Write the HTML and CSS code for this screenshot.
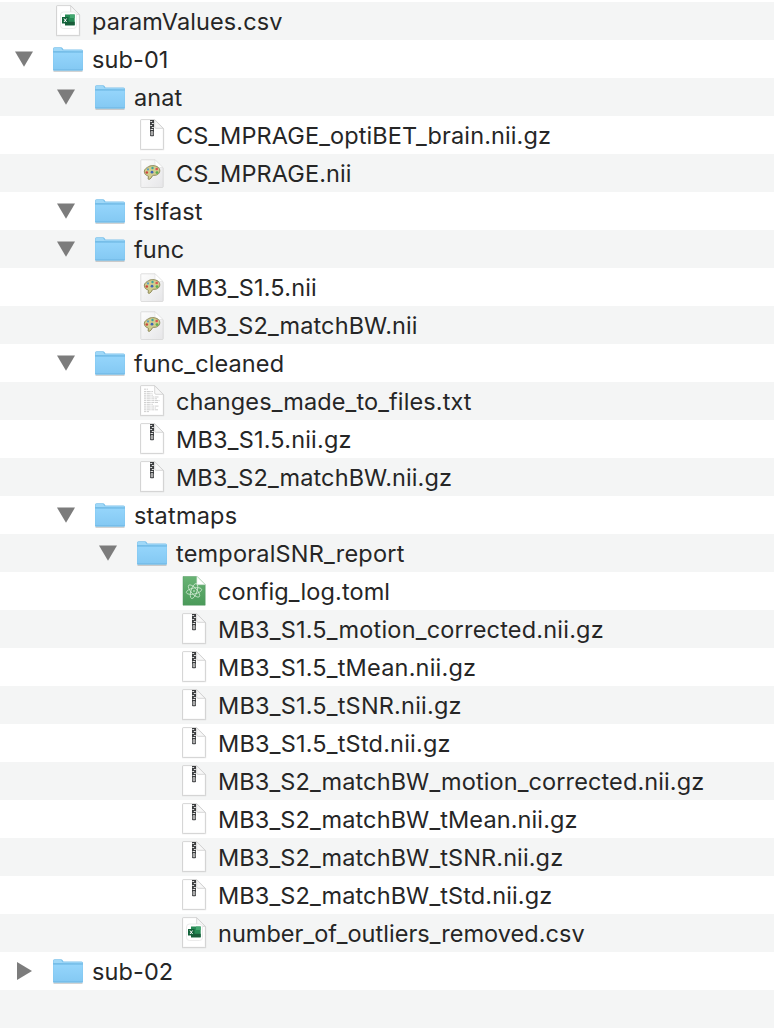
FILE: index.html
```
<!DOCTYPE html>
<html lang="en">
<head>
<meta charset="utf-8">
<title>Files</title>
<link rel="stylesheet" href="styles.css">
</head>
<body>
<svg class="defs" width="0" height="0">
  <defs>
    <linearGradient id="blue" x2="0" y2="1"><stop stop-color="#95d5fb"/><stop offset="1" stop-color="#84c9f3"/></linearGradient>
    <linearGradient id="green" x2="0" y2="1"><stop stop-color="#68b374"/><stop offset="1" stop-color="#4a9a59"/></linearGradient>
    <linearGradient id="grey" x2="1" y2="1"><stop stop-color="#fdfdfd"/><stop offset="1" stop-color="#e6e6e8"/></linearGradient>
    <symbol id="down" viewBox="0 0 20 20"><path d="M1 2.6H19L10 17.8Z" fill="#7c7c7c"/></symbol>
    <symbol id="right" viewBox="0 0 20 20"><path d="M3 1V19L18 10Z" fill="#7c7c7c"/></symbol>
    <symbol id="folder" viewBox="0 0 32 32">
      <path d="M1.5 28.2H30.5" stroke="#000" stroke-opacity=".22" stroke-width="1.2"/>
      <path d="M1 6Q1 4.3 2.5 4.3H9Q10 4.3 10.7 5.2L11.5 6.5H29.5Q31 6.5 31 8V26.5Q31 27.6 29.8 27.6H2.2Q1 27.6 1 26.5Z" fill="#7cc2ec"/>
      <path d="M1.5 8V6Q1.5 5 2.6 5H9L10.6 7.2H29.3Q30.5 7.2 30.5 8.6Z" fill="#9fd8f8"/>
      <path d="M1.3 9.3H30.7V26.6H1.3Z" fill="url(#blue)"/>
      <path d="M1.2 9H30.8M1.2 27H30.8" stroke="#68b4e1" stroke-width=".8"/>
    </symbol>
    <symbol id="page" viewBox="0 0 32 32">
      <path d="M4 1.2H19.2L28.2 10V31.2H4Z" fill="#000" opacity=".1"/>
      <path d="M5.3.6H18.7L27.4 9.4V29.6Q27.4 30.4 26.6 30.4H5.4Q4.6 30.4 4.6 29.6V1.3Q4.6.6 5.3.6Z" fill="#fff" stroke="#cbcbcb" stroke-width=".8"/>
      <path d="M18.7.8V8Q18.7 9.3 20 9.3H27.2Z" fill="#f8f8f8" stroke="#cecece" stroke-width=".8"/>
    </symbol>
    <symbol id="csv" viewBox="0 0 32 32">
      <use href="#page"/>
      <rect x="8.5" y="7" width="16" height="16.5" rx="3" fill="#fff" stroke="#e6e6e6" stroke-width=".8"/>
      <path d="M13 9.5H22.7V20.3H13Z" fill="#278a55"/>
      <path d="M18 9.5H22.7V13H18Z" fill="#43a770"/>
      <path d="M13 16.8H22.7V20.3H13Z" fill="#195c39"/>
      <path d="M10 12H16.5V18.5H10Z" fill="#12633a"/>
      <path d="M12 13.5L14.6 17M14.6 13.5L12 17" stroke="#fff" stroke-width="1"/>
    </symbol>
    <symbol id="zip" viewBox="0 0 32 32">
      <use href="#page"/>
      <path d="M14 1H18V16Q18 17.2 17 17.2H15Q14 17.2 14 16Z" fill="#3b3d3f"/>
      <path d="M14.3 2.5H16.2M15.8 4.5H17.8M14.3 6.5H16.2M15.8 8.5H17.8M14.6 10.5H17.2" stroke="#e2e2e2" stroke-width="1.1"/>
      <path d="M15.1 12.6H16.9V15.8H15.1Z" fill="#888" stroke="#ddd" stroke-width=".7"/>
    </symbol>
    <symbol id="nii" viewBox="0 0 32 32">
      <path d="M5.4 2.8H19L27.2 11V29.6Q27.2 30.5 26.3 30.5H5.6Q4.8 30.5 4.8 29.6V3.5Q4.8 2.8 5.4 2.8Z" fill="url(#grey)" stroke="#d3d3d3" stroke-width=".7"/>
      <path d="M19 2.8V9Q19 10.5 20.5 10.5H27Z" fill="#fff" stroke="#ddd" stroke-width=".6"/>
      <path d="M8.4 15.2C7.8 12 11.3 10.5 13 9.4C15.5 8 21 8.4 23 11.2C24.7 13.8 23.5 17 20.5 18C18.6 18.7 16.9 17.8 16.3 18.9C15.5 20.3 14.6 22.3 12.8 22.4C11.3 22.3 12.8 20 12.3 19.2C11.6 18.4 9 18.6 8.4 15.2Z" fill="#d1cd8d" stroke="#85804f" stroke-width=".9"/>
      <circle cx="12" cy="12.4" r="1.1" fill="#5e9fc0"/><circle cx="16.5" cy="11" r="1.2" fill="#41a49b"/>
      <circle cx="20.7" cy="12" r="1.3" fill="#df5551"/><circle cx="21" cy="15.6" r="1.4" fill="#5cad4e"/>
      <circle cx="10.8" cy="15.5" r="1.3" fill="#cd483e"/><circle cx="16" cy="15.2" r="1.4" fill="#3f65b4"/>
    </symbol>
    <symbol id="txt" viewBox="0 0 32 32">
      <use href="#page"/>
      <path d="M8 4.2H12M8 6.5H17M8 8.3H16.5M8 10.2H17M8 12H23M8 13.8H21M8 15.6H23.5M8 17.5H22M8 19.3H17M8 21.1H23M8 23H20M8 24.8H22M8 26.6H13" stroke="#bbb" stroke-width=".7" stroke-dasharray="2.2 .6 3.1 .5 1.2 .5"/>
    </symbol>
    <symbol id="toml" viewBox="0 0 32 32">
      <path d="M5 1.5H19L27.2 9.7V30.2H5Z" fill="url(#green)" stroke="#529660" stroke-width=".5"/>
      <path d="M18.8 1.2V9.7H27.3Z" fill="#fff" stroke="#bcd8c0" stroke-width=".5"/>
      <g fill="none" stroke="#d3ead5" stroke-width=".75">
        <ellipse cx="16" cy="16" rx="7.8" ry="3" transform="rotate(-12 16 16)"/>
        <ellipse cx="16" cy="16" rx="7.8" ry="3" transform="rotate(48 16 16)"/>
        <ellipse cx="16" cy="16" rx="7.8" ry="3" transform="rotate(108 16 16)"/>
      </g>
      <circle cx="16" cy="16" r=".8" fill="#e2f2e2"/>
    </symbol>
  </defs>
</svg>
<main class="tree">
  <div class="row l0"><span class="arrow"></span><svg class="icon"><use href="#csv"/></svg><span class="name">paramValues.csv</span></div>
  <div class="row l0"><svg class="arrow"><use href="#down"/></svg><svg class="icon"><use href="#folder"/></svg><span class="name">sub-01</span></div>
  <div class="row l1"><svg class="arrow"><use href="#down"/></svg><svg class="icon"><use href="#folder"/></svg><span class="name">anat</span></div>
  <div class="row l2"><span class="arrow"></span><svg class="icon"><use href="#zip"/></svg><span class="name">CS_MPRAGE_optiBET_brain.nii.gz</span></div>
  <div class="row l2"><span class="arrow"></span><svg class="icon"><use href="#nii"/></svg><span class="name">CS_MPRAGE.nii</span></div>
  <div class="row l1"><svg class="arrow"><use href="#down"/></svg><svg class="icon"><use href="#folder"/></svg><span class="name">fslfast</span></div>
  <div class="row l1"><svg class="arrow"><use href="#down"/></svg><svg class="icon"><use href="#folder"/></svg><span class="name">func</span></div>
  <div class="row l2"><span class="arrow"></span><svg class="icon"><use href="#nii"/></svg><span class="name wide">MB3_S1.5.nii</span></div>
  <div class="row l2"><span class="arrow"></span><svg class="icon"><use href="#nii"/></svg><span class="name">MB3_S2_matchBW.nii</span></div>
  <div class="row l1"><svg class="arrow"><use href="#down"/></svg><svg class="icon"><use href="#folder"/></svg><span class="name">func_cleaned</span></div>
  <div class="row l2"><span class="arrow"></span><svg class="icon"><use href="#txt"/></svg><span class="name">changes_made_to_files.txt</span></div>
  <div class="row l2"><span class="arrow"></span><svg class="icon"><use href="#zip"/></svg><span class="name wide">MB3_S1.5.nii.gz</span></div>
  <div class="row l2"><span class="arrow"></span><svg class="icon"><use href="#zip"/></svg><span class="name">MB3_S2_matchBW.nii.gz</span></div>
  <div class="row l1"><svg class="arrow"><use href="#down"/></svg><svg class="icon"><use href="#folder"/></svg><span class="name wide">statmaps</span></div>
  <div class="row l2"><svg class="arrow"><use href="#down"/></svg><svg class="icon"><use href="#folder"/></svg><span class="name wide">temporalSNR_report</span></div>
  <div class="row l3"><span class="arrow"></span><svg class="icon"><use href="#toml"/></svg><span class="name">config_log.toml</span></div>
  <div class="row l3"><span class="arrow"></span><svg class="icon"><use href="#zip"/></svg><span class="name wide">MB3_S1.5_motion_corrected.nii.gz</span></div>
  <div class="row l3"><span class="arrow"></span><svg class="icon"><use href="#zip"/></svg><span class="name wide">MB3_S1.5_tMean.nii.gz</span></div>
  <div class="row l3"><span class="arrow"></span><svg class="icon"><use href="#zip"/></svg><span class="name wide">MB3_S1.5_tSNR.nii.gz</span></div>
  <div class="row l3"><span class="arrow"></span><svg class="icon"><use href="#zip"/></svg><span class="name wide">MB3_S1.5_tStd.nii.gz</span></div>
  <div class="row l3"><span class="arrow"></span><svg class="icon"><use href="#zip"/></svg><span class="name">MB3_S2_matchBW_motion_corrected.nii.gz</span></div>
  <div class="row l3"><span class="arrow"></span><svg class="icon"><use href="#zip"/></svg><span class="name">MB3_S2_matchBW_tMean.nii.gz</span></div>
  <div class="row l3"><span class="arrow"></span><svg class="icon"><use href="#zip"/></svg><span class="name">MB3_S2_matchBW_tSNR.nii.gz</span></div>
  <div class="row l3"><span class="arrow"></span><svg class="icon"><use href="#zip"/></svg><span class="name">MB3_S2_matchBW_tStd.nii.gz</span></div>
  <div class="row l3"><span class="arrow"></span><svg class="icon"><use href="#csv"/></svg><span class="name tight">number_of_outliers_removed.csv</span></div>
  <div class="row l0"><svg class="arrow"><use href="#right"/></svg><svg class="icon"><use href="#folder"/></svg><span class="name">sub-02</span></div>
  <div class="row"></div>
</main>
</body>
</html>
```
FILE: styles.css
```
body {
  margin: 0;
  background: #fff;
  color: #262626;
  font-family: Inter, "Liberation Sans", sans-serif;
  font-size: 23.5px;
}
.defs { display: block; }
.tree { padding-top: 2px; }
.row {
  display: flex;
  align-items: center;
  box-sizing: border-box;
  height: 38px;
  padding-left: 14px;
}
.row:nth-child(odd) { background: #f4f5f5; }
.l1 { padding-left: 56px; }
.l2 { padding-left: 98px; }
.l3 { padding-left: 140px; }
.arrow {
  flex: none;
  width: 20px;
  height: 20px;
  margin-right: 18px;
}
.icon {
  flex: none;
  width: 32px;
  height: 32px;
  margin-right: 8px;
}
.name {
  padding-top: 2px;
  line-height: 36px;
  letter-spacing: 0.11px;
  white-space: nowrap;
}
.wide { letter-spacing: 0.2px; }
.tight { letter-spacing: 0.03px; }
```
